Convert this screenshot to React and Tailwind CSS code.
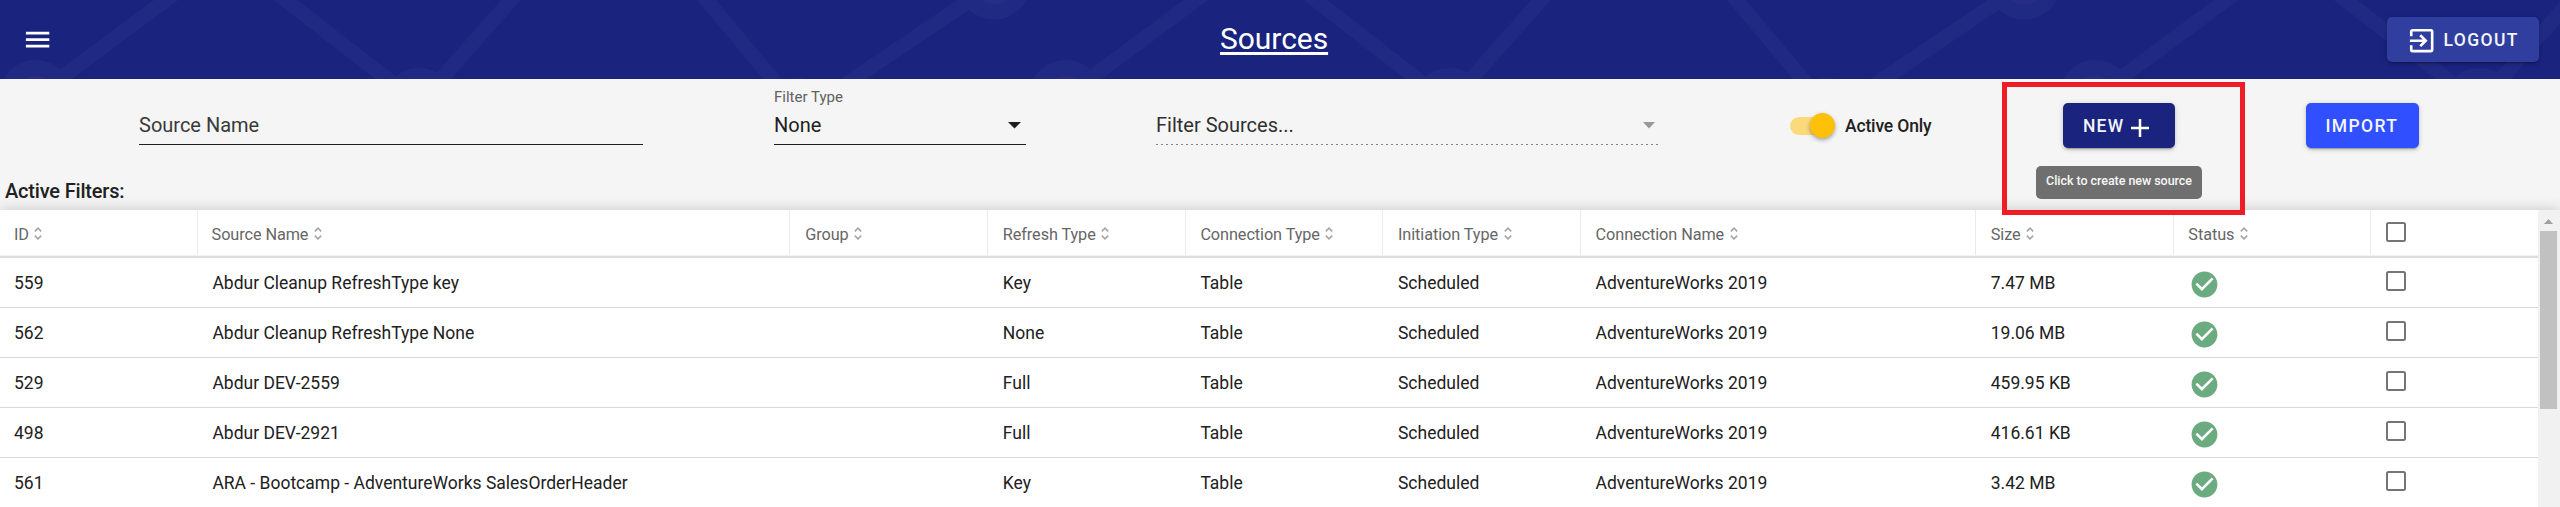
import React from "react";

const columns = [
  { label: "ID", key: "id", width: "w-[197.6px]" },
  { label: "Source Name", key: "name", width: "w-[592.8px]" },
  { label: "Group", key: "group", width: "w-[197.6px]" },
  { label: "Refresh Type", key: "refresh", width: "w-[197.6px]" },
  { label: "Connection Type", key: "connType", width: "w-[197.6px]" },
  { label: "Initiation Type", key: "initiation", width: "w-[197.6px]" },
  { label: "Connection Name", key: "connName", width: "w-[395.2px]" },
  { label: "Size", key: "size", width: "w-[197.6px]" },
];

const base = { group: "", connType: "Table", initiation: "Scheduled", connName: "AdventureWorks 2019" };
const rows = [
  { ...base, id: "559", name: "Abdur Cleanup RefreshType key", refresh: "Key", size: "7.47 MB" },
  { ...base, id: "562", name: "Abdur Cleanup RefreshType None", refresh: "None", size: "19.06 MB" },
  { ...base, id: "529", name: "Abdur DEV-2559", refresh: "Full", size: "459.95 KB" },
  { ...base, id: "498", name: "Abdur DEV-2921", refresh: "Full", size: "416.61 KB" },
  { ...base, id: "561", name: "ARA - Bootcamp - AdventureWorks SalesOrderHeader", refresh: "Key", size: "3.42 MB" },
];

function HeaderPattern() {
  return (
    <svg className="absolute inset-0" width="2560" height="79">
      <defs>
        <pattern id="graph" width="1030" height="79" patternUnits="userSpaceOnUse">
          <g stroke="#212a83" strokeWidth="14.2" fill="none">
            <path d="M179.5 -10L46 89" />
            <path d="M272.7 -10L400 89" />
            <path d="M519.9 -10L432.1 89" />
            <path d="M698.1 -10L780.9 89" />
            <path d="M985.3 -10L838.7 89" />
          </g>
          <g fill="#212a83">
            <circle cx="35.6" cy="96.5" r="36.5" />
            <circle cx="419.3" cy="105" r="37" />
            <circle cx="797" cy="114" r="36" />
            <circle cx="994" cy="-17" r="36.5" />
          </g>
          <g fill="#272c84">
            <circle cx="35.6" cy="95.5" r="20" />
            <circle cx="994" cy="-16" r="20" />
          </g>
        </pattern>
      </defs>
      <rect width="2560" height="79" fill="url(#graph)" />
    </svg>
  );
}

function SortIcon() {
  return (
    <svg className="ml-[5.5px] mt-px shrink-0" width="8" height="13" viewBox="0 0 8 13" fill="none" stroke="#a6a6a6" strokeWidth="1.6">
      <path d="M0.8 4.4L4 1.2L7.2 4.4M0.8 8.6L4 11.8L7.2 8.6" />
    </svg>
  );
}

function Checkbox() {
  return <div className="h-5 w-5 rounded-[2.5px] border-2 border-[#757575]" />;
}

function CheckCircle() {
  return (
    <svg width="31" height="31" viewBox="0 0 24 24" fill="#6aab7f">
      <path d="M12 2C6.48 2 2 6.48 2 12s4.48 10 10 10 10-4.48 10-10S17.52 2 12 2zm-2 15l-5-5 1.41-1.41L10 14.17l7.59-7.59L19 8l-9 9z" />
    </svg>
  );
}

const elevation =
  "shadow-[0_3px_1px_-2px_rgba(0,0,0,0.2),0_2px_3px_0_rgba(0,0,0,0.14),0_1px_6px_0_rgba(0,0,0,0.12)]";

export default function App() {
  return (
    <div className="relative flex h-[507px] w-[2560px] flex-col overflow-hidden bg-[#f5f5f5] font-['Roboto',sans-serif] text-[17.5px] text-[#212121]">
      <header className="relative flex h-[79px] shrink-0 items-center bg-[#1a237e] text-white">
        <HeaderPattern />
        <svg className="relative ml-[22px]" width="31.2" height="31.2" viewBox="0 0 24 24" fill="#fff">
          <path d="M3 6h18v2H3zM3 11h18v2H3zM3 16h18v2H3z" />
        </svg>
        <h1 className="relative mb-[2px] ml-[1166.8px] w-[110px] text-[30px] leading-[38px] tracking-[-0.05px] whitespace-nowrap underline decoration-[3px] underline-offset-[3px] [text-decoration-skip-ink:none]">
          Sources
        </h1>
        <button
          className={`relative ml-[1057px] flex h-[45px] w-[152px] items-center rounded-[5px] bg-[#303f9f] pl-[19px] font-medium ${elevation}`}
        >
          <svg className="mt-[3px]" width="31.4" height="31.4" viewBox="0 0 24 24" fill="none" stroke="#fff" strokeWidth="2">
            <path d="M4 8.6V5a1 1 0 0 1 1-1h14a1 1 0 0 1 1 1v14a1 1 0 0 1-1 1H5a1 1 0 0 1-1-1v-3.6" />
            <path d="M3 12h11.6M10.9 7.8L15.1 12l-4.2 4.2" />
          </svg>
          <span className="mt-px ml-[6px] tracking-[1.4px] text-[#f4f5fa]">LOGOUT</span>
        </button>
      </header>

      <section className="flex h-[104px] shrink-0 pl-[139px] text-xl leading-7">
        <div className="mt-[32px] h-[34px] w-[504px] border-b border-[#1f1f1f] text-[#3a3a3a]">Source Name</div>
        <div className="ml-[131px] w-[252px]">
          <div className="mt-[9px] h-[18px] text-[15px] leading-[18px] text-[#616161]">Filter Type</div>
          <div className="mt-[5px] flex h-[34px] justify-between border-b border-[#1f1f1f]">
            <span>None</span>
            <svg className="mt-[11px] mr-[5px]" width="13" height="7" viewBox="0 0 13 7" fill="#1f1f1f">
              <path d="M0 0h13L6.5 6.5z" />
            </svg>
          </div>
        </div>
        <div className="mt-[32px] ml-[130px] w-[503px]">
          <div className="flex h-[33px] justify-between text-[#303030]">
            <span>Filter Sources...</span>
            <svg className="mt-[11px] mr-[4px]" width="12" height="7" viewBox="0 0 12 7" fill="#999999">
              <path d="M0 0h12L6 6.5z" />
            </svg>
          </div>
          <div className="h-px bg-[repeating-linear-gradient(to_right,#858585_0_2px,transparent_2px_5px)]" />
        </div>
        <div className="mt-[34px] ml-[131px] flex h-[26px] w-[273px]">
          <div className="mt-1 flex h-[18px] w-[44px] rounded-full bg-[#fada7b]">
            <div className="-mt-1 ml-5 h-[25px] w-[25px] shrink-0 rounded-full bg-[#ffc107] shadow-[0_2px_4px_rgba(0,0,0,0.35)]" />
          </div>
          <span className="ml-[11px] text-[17.5px] leading-[26px] font-medium tracking-[-0.15px]">Active Only</span>
        </div>
        <button
          className={`mt-[24px] flex h-[45px] w-[112px] items-center rounded-[5px] bg-[#1a237e] pl-5 text-[17.5px] font-medium text-white ${elevation}`}
        >
          <span className="tracking-[1.2px] text-[#f3f4f9]">NEW</span>
          <svg className="mt-[5px] ml-[7px]" width="18" height="18" viewBox="0 0 18 18" stroke="#fff" strokeWidth="2.5">
            <path d="M0 9h18M9 0v18" />
          </svg>
        </button>
        <button
          className={`mt-[24px] ml-[131px] flex h-[45px] w-[113px] items-center rounded-[5px] bg-[#304ffe] pl-[19.5px] text-[17.5px] font-medium text-white ${elevation}`}
        >
          <span className="tracking-[1.35px] text-[#f5f6ff]">IMPORT</span>
        </button>
      </section>

      <div className="h-[27px] shrink-0 pl-[5px] text-xl leading-[17px] font-medium tracking-[-0.18px]">Active Filters:</div>

      <main className="flex h-[297px] shrink-0 bg-white shadow-[0_0_14px_rgba(0,0,0,0.2)]">
        <div className="w-[2538px]">
          <div className="flex h-[45px] text-[16.25px] text-[#666666]">
            {columns.map((c, i) => (
              <div
                key={c.key}
                className={`flex shrink-0 items-center border-r border-[#ebebeb] ${i > 1 ? "pl-[14.8px]" : "pl-[14px]"} ${c.width}`}
              >
                <span className="mt-[5px] tracking-[-0.08px]">{c.label}</span>
                <SortIcon />
              </div>
            ))}
            <div className="flex w-[197.6px] shrink-0 items-center border-r border-[#ebebeb] pl-[14.8px]">
              <span className="mt-[5px] tracking-[-0.08px]">Status</span>
              <SortIcon />
            </div>
            <div className="pt-3 pl-[15px]">
              <Checkbox />
            </div>
          </div>
          <div className="h-[3px] border-t border-[#f3f3f3] bg-[#dcdcdc]" />
          {rows.map((r) => (
            <div key={r.id} className="flex h-[50px] border-b border-[#d9d9d9]">
              {columns.map((c, i) => (
                <div
                  key={c.key}
                  className={`shrink-0 leading-[50px] whitespace-nowrap ${i > 0 ? "pl-[14.8px]" : "pl-[14px]"} ${c.width}`}
                >
                  {r[c.key]}
                </div>
              ))}
              <div className="w-[197.6px] shrink-0 pt-[10.5px] pl-[15px]">
                <CheckCircle />
              </div>
              <div className="pt-[13px] pl-[15px]">
                <Checkbox />
              </div>
            </div>
          ))}
        </div>
        <div className="w-[22px] bg-[#f1f1f1] pl-[2px]">
          <div className="flex h-[21px] w-[17px] justify-center pt-[9px]">
            <svg width="9" height="5" viewBox="0 0 9 5" fill="#a0a0a0">
              <path d="M0 5L4.5 0L9 5z" />
            </svg>
          </div>
          <div className="h-[178px] w-[17px] bg-[#c1c1c1]" />
        </div>
      </main>

      <div className="absolute top-[166px] left-[2036px] flex h-[33px] w-[166px] items-center justify-center rounded-[5px] bg-[#6f6f6f] pb-[2px] text-[12.5px] font-medium tracking-[-0.05px] whitespace-nowrap text-[#f7f7f7]">
        Click to create new source
      </div>
      <div className="absolute top-[82px] left-[2002px] h-[133px] w-[243px] border-[5px] border-[#ee1c24]" />
    </div>
  );
}
